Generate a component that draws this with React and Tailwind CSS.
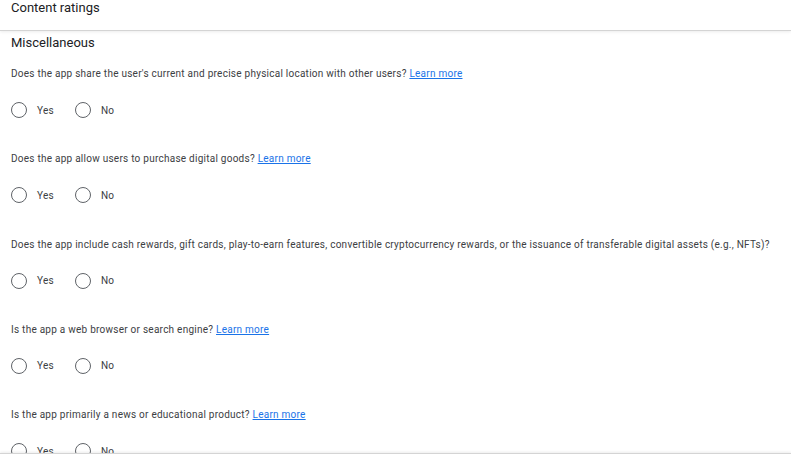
const questions = [
  { text: "Does the app share the user's current and precise physical location with other users?", link: true },
  { text: "Does the app allow users to purchase digital goods?", link: true },
  {
    text: "Does the app include cash rewards, gift cards, play-to-earn features, convertible cryptocurrency rewards, or the issuance of transferable digital assets (e.g., NFTs)?",
    link: false,
  },
  { text: "Is the app a web browser or search engine?", link: true },
  { text: "Is the app primarily a news or educational product?", link: true },
]

function Radio({ label }) {
  return (
    <label className="flex items-center gap-[10px]">
      <span className="w-[16px] h-[16px] rounded-full border-[1.5px] border-[#5f6368] bg-white" />
      <span className="text-[10px] tracking-[0.25px] text-[#3c4043]">{label}</span>
    </label>
  )
}

export default function App() {
  return (
    <div
      className="w-[791px] h-[461px] bg-white flex flex-col overflow-hidden"
      style={{ fontFamily: "Roboto, 'Liberation Sans', sans-serif" }}
    >
      {/* Header */}
      <div className="h-[31px] shrink-0 border-b border-[#d4d4d4] shadow-[0_1px_3px_rgba(0,0,0,0.08)] px-[11px] pt-[1px] relative z-10">
        <h1 className="text-[13px] leading-[14px] text-[#202124]">Content ratings</h1>
      </div>

      {/* Body */}
      <div className="flex-1 overflow-hidden px-[11px]">
        <h2 className="text-[13px] leading-[16px] text-[#202124] mt-[4px]">Miscellaneous</h2>
        <div className="flex flex-col mt-[17px]">
          {questions.map((q, i) => (
            <div key={i} className="h-[85.25px] shrink-0">
              <p className="text-[10px] leading-[12px] tracking-[0.25px] text-[#3c4043]">
                {q.text}{" "}
                {q.link && (
                  <a href="#" className="text-[#1a73e8] underline">
                    Learn more
                  </a>
                )}
              </p>
              <div className="flex items-center gap-[21px] mt-[22px]">
                <Radio label="Yes" />
                <Radio label="No" />
              </div>
            </div>
          ))}
        </div>
      </div>

      {/* Footer */}
      <div className="h-[8px] shrink-0 border-t border-[#d4d4d4] shadow-[0_-1px_3px_rgba(0,0,0,0.08)] bg-white relative z-10" />
    </div>
  )
}
